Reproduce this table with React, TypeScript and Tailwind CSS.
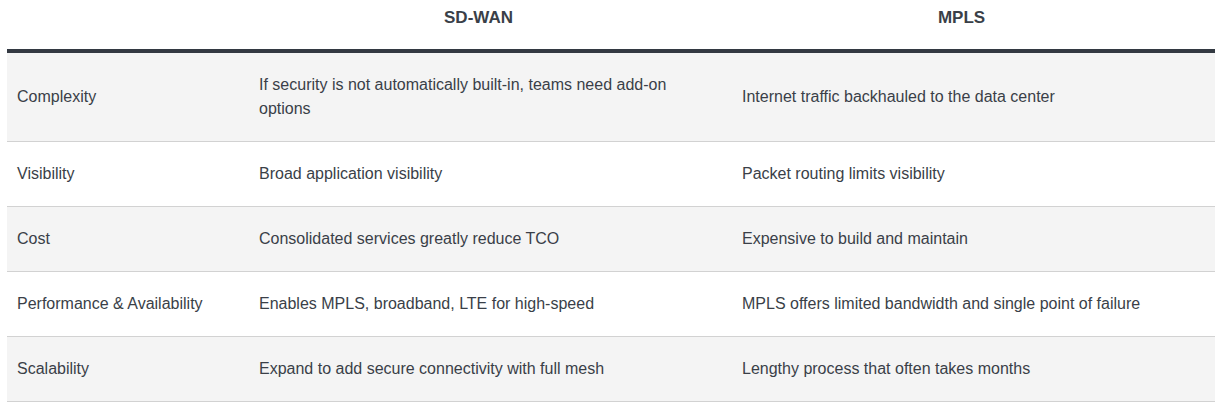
const rows = [
  {
    label: "Complexity",
    sdwan: "If security is not automatically built-in, teams need add-on options",
    mpls: "Internet traffic backhauled to the data center",
  },
  { label: "Visibility", sdwan: "Broad application visibility", mpls: "Packet routing limits visibility" },
  { label: "Cost", sdwan: "Consolidated services greatly reduce TCO", mpls: "Expensive to build and maintain" },
  {
    label: "Performance & Availability",
    sdwan: "Enables MPLS, broadband, LTE for high-speed",
    mpls: "MPLS offers limited bandwidth and single point of failure",
  },
  {
    label: "Scalability",
    sdwan: "Expand to add secure connectivity with full mesh",
    mpls: "Lengthy process that often takes months",
  },
];

export default function App() {
  return (
    <div className="min-h-[405px] bg-white font-['Liberation_Sans',Arial,sans-serif] text-[#3a3f48]">
      <div className="ml-[7px] w-[1208px]">
        <div className="grid h-[49px] grid-cols-[242px_483px_483px] border-b-4 border-[#333942] text-[17px] leading-6 font-bold box-content">
          <div />
          <div className="pt-[6px] pr-[34px] pl-[10px] text-center">SD-WAN</div>
          <div className="pt-[6px] pr-[34px] pl-[10px] text-center">MPLS</div>
        </div>
        {rows.map((r, i) => (
          <div
            key={r.label}
            className={`grid grid-cols-[242px_483px_483px] border-b border-[#d2d2d2] text-[16px] leading-6 ${
              i % 2 === 0 ? "bg-[#f4f4f4]" : "bg-white"
            }`}
          >
            <div className="flex items-center px-[10px] py-5">{r.label}</div>
            <div className="flex items-center px-[10px] py-5">{r.sdwan}</div>
            <div className="flex items-center px-[10px] py-5">{r.mpls}</div>
          </div>
        ))}
      </div>
    </div>
  );
}
